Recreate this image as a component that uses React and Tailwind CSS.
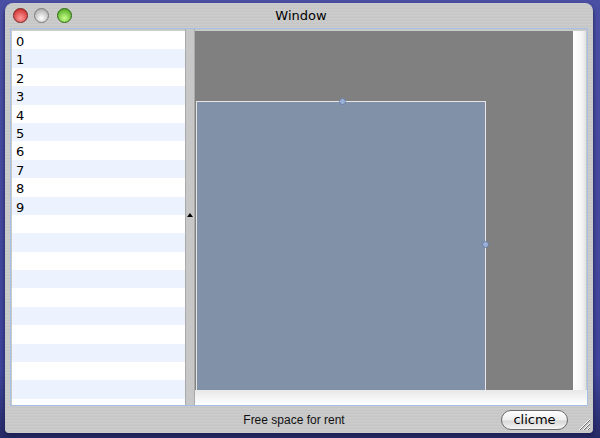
import React from 'react'

const rows = Array.from({ length: 20 }, (_, i) => (i < 10 ? String(i) : ''))

function Light({ from, to, ring }) {
  return (
    <div
      className="w-[15px] h-[15px] rounded-full border"
      style={{ background: `radial-gradient(circle at 50% 70%, ${from}, ${to})`, borderColor: ring }}
    />
  )
}

export default function App() {
  return (
    <div className="w-[600px] h-[438px] overflow-hidden bg-[linear-gradient(180deg,#4a4fa3_0%,#3f449a_85%,#262a66_100%)] pt-[3px] pl-[5px] font-['DejaVu_Sans',sans-serif]">
      <div className="w-[588px] h-[430px] rounded-t-[8px] rounded-b-[4px] flex flex-col bg-[repeating-linear-gradient(180deg,#d4d4d4_0px,#c4c4c4_1px,#cfcfcf_2px,#bdbdbd_3px)] shadow-[0_3px_4px_#1c1f50]">
        {/* title bar */}
        <div className="h-[25px] flex items-center relative px-[8px] gap-[6px] shrink-0">
          <Light from="#ff9a9a" to="#c41a1a" ring="#7a2020" />
          <Light from="#ffffff" to="#9c9c9c" ring="#7a7a7a" />
          <div className="ml-[2px]">
            <Light from="#c8ff8a" to="#3c9a10" ring="#2c6a10" />
          </div>
          <div className="absolute inset-0 flex items-center justify-center text-[13px] text-black pl-[4px] pt-[1px]">Window</div>
        </div>

        {/* content frame */}
        <div className="mx-[5px] h-[378px] border border-[#a6bfe3] flex shrink-0">
          {/* list */}
          <div className="w-[173px] ml-[1px] mt-[2px] bg-white overflow-hidden">
            {rows.map((r, i) => (
              <div
                key={i}
                className={`h-[18.4px] pl-[4px] pt-[2px] text-[13px] leading-[18px] text-black ${i % 2 ? 'bg-[#edf3fe]' : 'bg-white'}`}
              >
                {r}
              </div>
            ))}
          </div>
          {/* splitter */}
          <div className="w-[10px] bg-[repeating-linear-gradient(90deg,#cfcfcf_0px,#bdbdbd_1px,#d4d4d4_2px)] border-x border-[#aaaaaa] flex items-center justify-center">
            <div className="w-0 h-0 border-x-[3px] border-x-transparent border-b-[4px] border-b-black mt-[-4px]" />
          </div>
          {/* right area */}
          <div className="flex-1 flex flex-col mt-[2px]">
            <div className="flex flex-1">
              <div className="w-[378px] bg-[#808080] flex flex-col justify-end pl-[1px]">
                <div className="relative w-[290px] h-[289px] bg-[#8091a8] border border-[#e6e6e6] border-b-0">
                  <div className="absolute top-[-4px] left-[142px] w-[7px] h-[7px] rounded-full bg-[#9cb0d6] border border-[#6b80aa]" />
                  <div className="absolute top-[139px] right-[-4px] w-[7px] h-[7px] rounded-full bg-[#9cb0d6] border border-[#6b80aa]" />
                </div>
              </div>
              <div className="flex-1 bg-[linear-gradient(90deg,#ffffff_0%,#f4f4f4_70%,#e0e0e0_100%)] border-r border-[#c8c8c8]" />
            </div>
            <div className="h-[15px] bg-[linear-gradient(180deg,#e8e8e8_0%,#ffffff_100%)]" />
          </div>
        </div>

        {/* bottom bar */}
        <div className="flex-1 flex items-center relative">
          <div className="absolute inset-0 flex items-center justify-center text-[12px] text-[#111] font-['Liberation_Sans',sans-serif]">
            <span className="mr-[10px]">Free space for rent</span>
          </div>
          <div className="ml-auto mr-[25px] w-[67px] h-[20px] rounded-full border border-[#6a6a6a] bg-[linear-gradient(180deg,#ffffff_0%,#eeeeee_50%,#d8d8d8_55%,#f4f4f4_100%)] flex items-center justify-center text-[13px] text-black relative z-10">
            clicme
          </div>
          <svg className="absolute right-[2px] bottom-[2px]" width="14" height="14" viewBox="0 0 14 14">
            <path d="M2 13 L13 2 M6 13 L13 6 M10 13 L13 10" stroke="#ffffff" strokeWidth="1" />
            <path d="M3 13 L13 3 M7 13 L13 7 M11 13 L13 11" stroke="#707070" strokeWidth="1" />
          </svg>
        </div>
      </div>
    </div>
  )
}
